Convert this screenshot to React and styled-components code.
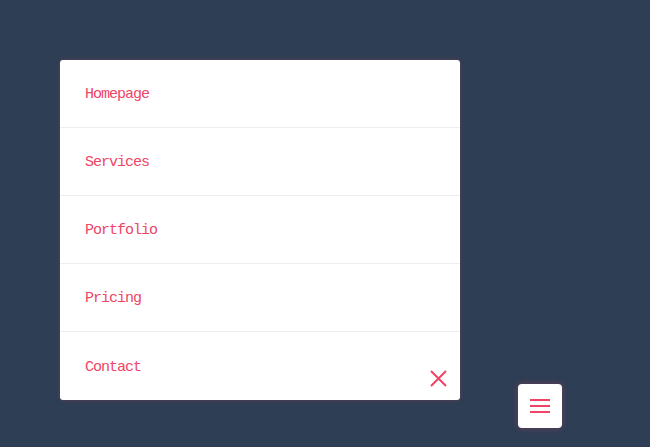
import React, { useLayoutEffect } from "react";
import styled, { createGlobalStyle } from "styled-components";

const Global = createGlobalStyle`
  html, body { margin: 0; padding: 0; background: #2e3e54; }
  body { font-family: "Liberation Mono", "DejaVu Sans Mono", monospace; }
  * { box-sizing: border-box; }
`;

const Page = styled.div`
  min-height: 718px;
  padding: 279px 0 0 60px;
`;

const Stage = styled.div`
  position: relative;
  width: 502px;
`;

const Menu = styled.nav`
  position: relative;
  width: 400px;
  background: #ffffff;
  border-radius: 3px;
  box-shadow: 0 0 4px rgba(238, 68, 102, 0.25);
  overflow: hidden;
`;

const Item = styled.a`
  display: flex;
  align-items: center;
  height: 68px;
  padding: 2px 0 0 25px;
  color: #ee4466;
  font-size: 15px;
  letter-spacing: -1px;
  text-decoration: none;
  border-bottom: ${(p) => (p.$last ? "none" : "1px solid #eeeeee")};
`;

const Close = styled.button`
  position: absolute;
  right: 12px;
  bottom: 12px;
  width: 20px;
  height: 20px;
  padding: 0;
  border: none;
  background: transparent;
  display: flex;
  align-items: center;
  justify-content: center;
`;

const Burger = styled.button`
  position: absolute;
  left: 458px;
  top: 324px;
  width: 44px;
  height: 44px;
  padding: 0;
  border: none;
  border-radius: 4px;
  background: #ffffff;
  box-shadow: 0 0 6px rgba(238, 68, 102, 0.35);
  display: flex;
  flex-direction: column;
  align-items: center;
  justify-content: center;
  gap: 4px;
`;

const Line = styled.span`
  display: block;
  width: 20px;
  height: 2px;
  background: #ee4466;
`;

const items = ["Homepage", "Services", "Portfolio", "Pricing", "Contact"];

export default function App() {
  useLayoutEffect(() => {
    window.scrollTo(0, 219);
  }, []);
  return (
    <>
      <Global />
      <Page>
        <Stage>
          <Menu>
            {items.map((t, i) => (
              <Item key={t} href="#" $last={i === items.length - 1}>
                {t}
              </Item>
            ))}
            <Close aria-label="Close">
              <svg width="17" height="17" viewBox="0 0 17 17">
                <path d="M1 1L16 16M16 1L1 16" stroke="#ee4466" strokeWidth="2" fill="none" />
              </svg>
            </Close>
          </Menu>
          <Burger aria-label="Menu">
            <Line />
            <Line />
            <Line />
          </Burger>
        </Stage>
      </Page>
    </>
  );
}
